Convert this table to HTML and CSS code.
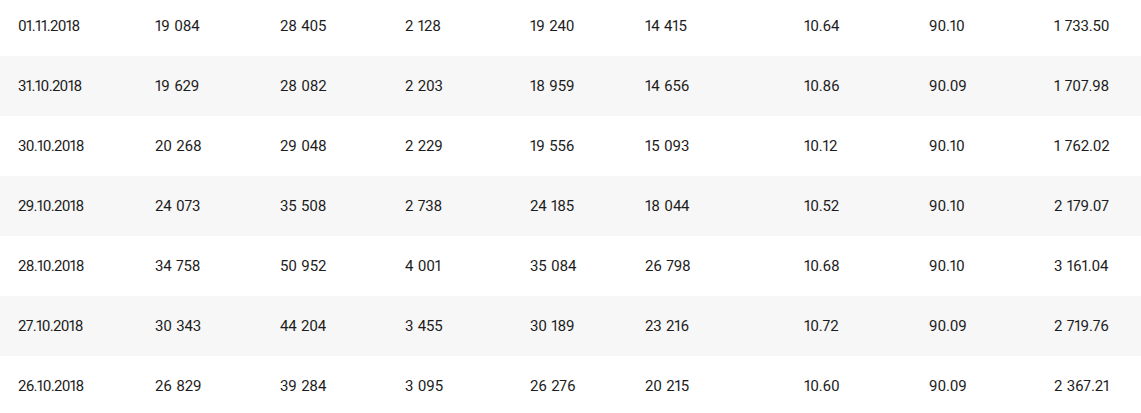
FILE: index.html
```html
<!DOCTYPE html>
<html>
<head>
<meta charset="utf-8">
<link rel="stylesheet" href="styles.css">
</head>
<body>
<div class="table">
  <div class="row"><span class="date">01.11.2018</span><span>19 084</span><span>28 405</span><span>2 128</span><span>19 240</span><span>14 415</span><span>10.64</span><span>90.10</span><span>1 733.50</span></div>
  <div class="row alt"><span class="date">31.10.2018</span><span>19 629</span><span>28 082</span><span>2 203</span><span>18 959</span><span>14 656</span><span>10.86</span><span>90.09</span><span>1 707.98</span></div>
  <div class="row"><span class="date">30.10.2018</span><span>20 268</span><span>29 048</span><span>2 229</span><span>19 556</span><span>15 093</span><span>10.12</span><span>90.10</span><span>1 762.02</span></div>
  <div class="row alt"><span class="date">29.10.2018</span><span>24 073</span><span>35 508</span><span>2 738</span><span>24 185</span><span>18 044</span><span>10.52</span><span>90.10</span><span>2 179.07</span></div>
  <div class="row"><span class="date">28.10.2018</span><span>34 758</span><span>50 952</span><span>4 001</span><span>35 084</span><span>26 798</span><span>10.68</span><span>90.10</span><span>3 161.04</span></div>
  <div class="row alt"><span class="date">27.10.2018</span><span>30 343</span><span>44 204</span><span>3 455</span><span>30 189</span><span>23 216</span><span>10.72</span><span>90.09</span><span>2 719.76</span></div>
  <div class="row"><span class="date">26.10.2018</span><span>26 829</span><span>39 284</span><span>3 095</span><span>26 276</span><span>20 215</span><span>10.60</span><span>90.09</span><span>2 367.21</span></div>
</div>
</body>
</html>
```
FILE: styles.css
```css
html, body {
  margin: 0;
  padding: 0;
  background: #fff;
}
body {
  font-family: Roboto, "Liberation Sans", sans-serif;
  font-size: 15px;
  color: #1c1c1c;
  font-variant-numeric: proportional-nums;
  word-spacing: 1px;
  letter-spacing: -0.2px;
  overflow: hidden;
}
.table {
  margin-top: -4px;
}
.row {
  display: grid;
  grid-template-columns: 137px 125px 125px 125px 115px 159px 125px 125px 1fr;
  height: 60px;
  align-items: center;
}
.row.alt {
  background: #f7f7f7;
}
.row span {
  padding-left: 18px;
  white-space: nowrap;
}
.row .date {
  letter-spacing: -0.7px;
}
```
